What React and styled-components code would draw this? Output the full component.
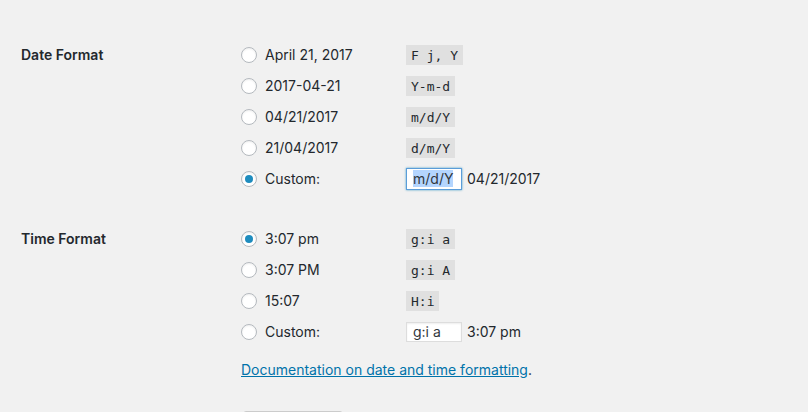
import React from "react";
import styled, { createGlobalStyle } from "styled-components";

const GlobalStyle = createGlobalStyle`
  html, body {
    margin: 0;
    padding: 0;
    background: #f1f1f1;
    overflow: hidden;
  }
  body {
    font-family: Inter, "Liberation Sans", Arial, sans-serif;
    font-size: 14px;
    color: #23282d;
  }
`;

const Page = styled.div`
  padding: 39px 0 0 21px;
  height: 412px;
  box-sizing: border-box;
`;

const Section = styled.div`
  display: grid;
  grid-template-columns: 220px 1fr;
  margin-top: ${(p) => p.gap || 0}px;
`;

const Heading = styled.div`
  font-weight: 600;
  line-height: 31px;
  color: #23282d;
`;

const Fieldset = styled.div`
  display: flex;
  flex-direction: column;
`;

const Option = styled.label`
  display: flex;
  align-items: center;
  height: 31px;
`;

const Radio = styled.span`
  position: relative;
  width: 16px;
  height: 16px;
  box-sizing: border-box;
  border-radius: 50%;
  border: 1px solid #b4b9be;
  background: #fff;
  box-shadow: inset 0 1px 2px rgba(0, 0, 0, 0.07);
  margin-right: 8px;
  flex-shrink: 0;

  &::after {
    content: "";
    display: ${(p) => (p.checked ? "block" : "none")};
    position: absolute;
    left: 3px;
    top: 3px;
    width: 8px;
    height: 8px;
    border-radius: 50%;
    background: #1e8cbe;
  }
`;

const LabelText = styled.span`
  width: 141px;
  flex-shrink: 0;
`;

const Code = styled.code`
  font-family: "DejaVu Sans Mono", "Liberation Mono", monospace;
  font-size: 13px;
  line-height: 15px;
  padding: 3px 5px 2px;
  background: rgba(0, 0, 0, 0.07);
  color: #23282d;
  white-space: pre;
`;

const FormatInput = styled.span`
  display: inline-flex;
  align-items: center;
  box-sizing: border-box;
  width: 56px;
  height: ${(p) => (p.focused ? 22 : 20)}px;
  padding: 0 6px;
  background: #fff;
  border: 1px solid ${(p) => (p.focused ? "#5b9dd9" : "#ddd")};
  box-shadow: ${(p) =>
    p.focused
      ? "0 0 2px rgba(30, 140, 190, 0.8)"
      : "inset 0 1px 2px rgba(0, 0, 0, 0.07)"};
  font-size: 14px;
  color: #32373c;
`;

const Selected = styled.span`
  background: #b4d5fe;
  line-height: 17px;
`;

const Preview = styled.span`
  margin-left: 5px;
`;

const LinkLine = styled.p`
  margin: 13px 0 0;
  line-height: 20px;
`;

const DocLink = styled.a`
  color: #0073aa;
  text-decoration: underline;
`;

const SubmitButton = styled.button`
  margin-top: 31px;
  margin-left: 2px;
  width: 100px;
  height: 30px;
  border: 1px solid #ccc;
  border-radius: 3px;
  background: #f7f7f7;
`;

const dateOptions = [
  { text: "April 21, 2017", code: "F j, Y" },
  { text: "2017-04-21", code: "Y-m-d" },
  { text: "04/21/2017", code: "m/d/Y" },
  { text: "21/04/2017", code: "d/m/Y" },
];

const timeOptions = [
  { text: "3:07 pm", code: "g:i a", checked: true },
  { text: "3:07 PM", code: "g:i A" },
  { text: "15:07", code: "H:i" },
];

export default function App() {
  return (
    <>
      <GlobalStyle />
      <Page>
        <Section>
          <Heading>Date Format</Heading>
          <Fieldset>
            {dateOptions.map((o) => (
              <Option key={o.code}>
                <Radio />
                <LabelText>{o.text}</LabelText>
                <Code>{o.code}</Code>
              </Option>
            ))}
            <Option>
              <Radio checked />
              <LabelText>Custom:</LabelText>
              <FormatInput focused>
                <Selected>m/d/Y</Selected>
              </FormatInput>
              <Preview>04/21/2017</Preview>
            </Option>
          </Fieldset>
        </Section>

        <Section gap={29}>
          <Heading>Time Format</Heading>
          <Fieldset>
            {timeOptions.map((o) => (
              <Option key={o.code}>
                <Radio checked={o.checked} />
                <LabelText>{o.text}</LabelText>
                <Code>{o.code}</Code>
              </Option>
            ))}
            <Option>
              <Radio />
              <LabelText>Custom:</LabelText>
              <FormatInput>g:i a</FormatInput>
              <Preview>3:07 pm</Preview>
            </Option>
            <LinkLine>
              <DocLink href="#">Documentation on date and time formatting</DocLink>.
            </LinkLine>
            <div>
              <SubmitButton type="button" />
            </div>
          </Fieldset>
        </Section>
      </Page>
    </>
  );
}
